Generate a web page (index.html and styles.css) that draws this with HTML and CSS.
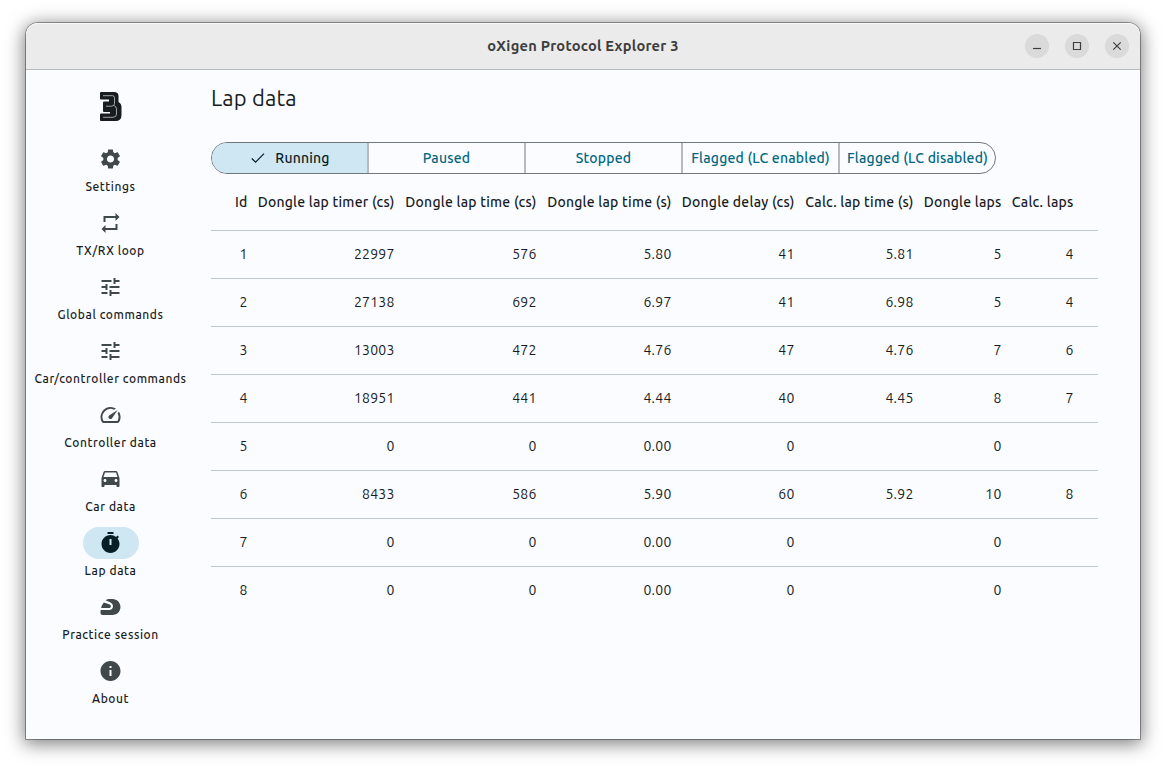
FILE: index.html
```html
<!DOCTYPE html>
<html lang="en">
<head>
<meta charset="utf-8">
<title>oXigen Protocol Explorer 3</title>
<link rel="stylesheet" href="styles.css">
</head>
<body>
<div class="window">
  <header class="titlebar">
    <h1 class="title">oXigen Protocol Explorer 3</h1>
    <div class="controls">
      <button class="control" aria-label="Minimize"><svg viewBox="0 0 24 24"><path d="M8 14.500h8"/></svg></button>
      <button class="control" aria-label="Maximize"><svg viewBox="0 0 24 24"><path d="M8.500 8.500h7v7h-7z"/></svg></button>
      <button class="control" aria-label="Close"><svg viewBox="0 0 24 24"><path d="M8.300 8.300l7.400 7.400M15.700 8.300l-7.400 7.400"/></svg></button>
    </div>
  </header>
  <div class="body">
    <nav class="rail">
      <svg class="logo" viewBox="0 0 24 30"><path class="logo-bold" d="M2 0h13q4.500 0 4.500 4v6q3 1.500 3 5v8q0 6-6 6H2q-1 0-1-1v-5.500q0-1 1-1h9V20H5q-1 0-1-1v-8.500q0-1 1-1h5V7.500H2q-1 0-1-1V1q0-1 1-1z"/><path class="logo-line" d="M4 3.700h9.500q2 0 2 2v5.500q0 3-3 3H7M15 13.500q2.500 1 2.500 3.500v5q0 3.300-3.500 3.300H4"/></svg>
      <a class="item"><span class="pill"><svg viewBox="0 0 24 24"><path d="M19.14 12.94c.04-.3.06-.61.06-.94 0-.32-.02-.64-.07-.94l2.030-1.580c.18-.14.23-.41.12-.61l-1.920-3.320c-.12-.22-.37-.29-.59-.22l-2.390.96c-.5-.38-1.030-.7-1.620-.94l-.36-2.540c-.04-.24-.24-.41-.48-.41h-3.840c-.24 0-.43.17-.47.41l-.36 2.540c-.59.24-1.130.57-1.620.94l-2.390-.96c-.22-.08-.47 0-.59.22L2.740 8.870c-.12.21-.08.47.12.61l2.030 1.580c-.05.3-.09.63-.09.94s.02.64.07.94l-2.030 1.580c-.18.14-.23.41-.12.61l1.920 3.320c.12.22.37.29.59.22l2.390-.96c.5.38 1.030.7 1.620.94l.36 2.540c.05.24.24.41.48.41h3.840c.24 0 .44-.17.47-.41l.36-2.540c.59-.24 1.130-.56 1.620-.94l2.390.96c.22.08.47 0 .59-.22l1.920-3.320c.12-.22.07-.47-.12-.61l-2.010-1.580zM12 15.600c-1.980 0-3.600-1.620-3.600-3.600s1.620-3.600 3.600-3.600 3.600 1.620 3.600 3.600-1.620 3.600-3.600 3.600z"/></svg></span><span class="label">Settings</span></a>
      <a class="item"><span class="pill"><svg viewBox="0 0 24 24"><path d="M7 7h10v3l4-4-4-4v3H5v6h2V7zm10 10H7v-3l-4 4 4 4v-3h12v-6h-2v4z"/></svg></span><span class="label">TX/RX loop</span></a>
      <a class="item"><span class="pill"><svg viewBox="0 0 24 24"><path d="M3 17v2h6v-2H3zM3 5v2h10V5H3zm10 16v-2h8v-2h-8v-2h-2v6h2zM7 9v2H3v2h4v2h2V9H7zm14 4v-2H11v2h10zm-6-4h2V7h4V5h-4V3h-2v6z"/></svg></span><span class="label">Global commands</span></a>
      <a class="item"><span class="pill"><svg viewBox="0 0 24 24"><path d="M3 17v2h6v-2H3zM3 5v2h10V5H3zm10 16v-2h8v-2h-8v-2h-2v6h2zM7 9v2H3v2h4v2h2V9H7zm14 4v-2H11v2h10zm-6-4h2V7h4V5h-4V3h-2v6z"/></svg></span><span class="label">Car/controller commands</span></a>
      <a class="item"><span class="pill"><svg viewBox="0 0 24 24"><path d="M20.380 8.570l-1.230 1.850a8 8 0 0 1-.22 7.580H5.070A8 8 0 0 1 15.580 6.850l1.850-1.230A10 10 0 0 0 3.350 19a2 2 0 0 0 1.720 1h13.850a2 2 0 0 0 1.740-1 10 10 0 0 0-.27-10.440zm-9.790 6.840a2 2 0 0 0 2.830 0l5.660-8.490-8.490 5.660a2 2 0 0 0 0 2.830z"/></svg></span><span class="label">Controller data</span></a>
      <a class="item"><span class="pill"><svg viewBox="0 0 24 24"><path d="M18.920 5.010C18.720 4.420 18.160 4 17.500 4h-11c-.66 0-1.210.42-1.420 1.010L3 11v8c0 .55.45 1 1 1h1c.55 0 1-.45 1-1v-1h12v1c0 .55.45 1 1 1h1c.55 0 1-.45 1-1v-8l-2.080-5.990zM6.500 15c-.83 0-1.500-.67-1.500-1.500S5.670 12 6.500 12s1.500.67 1.500 1.500S7.330 15 6.500 15zm11 0c-.83 0-1.500-.67-1.500-1.500s.67-1.500 1.500-1.500 1.500.67 1.500 1.500-.67 1.500-1.500 1.500zM5 10l1.500-4.500h11L19 10H5z"/></svg></span><span class="label">Car data</span></a>
      <a class="item active"><span class="pill"><svg viewBox="0 0 24 24"><path d="M9 1h6v2H9zM19.030 7.390l1.420-1.420c-.43-.51-.9-.99-1.410-1.410l-1.420 1.420C16.070 4.740 14.120 4 12 4c-4.970 0-9 4.030-9 9s4.020 9 9 9 9-4.030 9-9c0-2.120-.74-4.070-1.970-5.610zM13 14h-2V8h2v6z"/></svg></span><span class="label">Lap data</span></a>
      <a class="item"><span class="pill"><svg viewBox="0 0 24 24"><path d="M12 4C9.800 4 8.200 4.500 7 5.300l5.100 2.200a4 4 0 0 1 2.400 3.700c0 2.100-1.700 3.800-3.800 3.800H2.200c-.2 1-.2 2-.2 3 0 1.100.9 2 2 2h10c4.400 0 8-3.600 8-8s-3.600-8-8-8zM5.400 7.500C4 9 3.100 11 2.600 13h8c1 0 1.800-.8 1.800-1.800 0-.8-.5-1.400-1.200-1.700z" fill-rule="evenodd"/></svg></span><span class="label">Practice session</span></a>
      <a class="item"><span class="pill"><svg viewBox="0 0 24 24"><path d="M12 2C6.480 2 2 6.480 2 12s4.480 10 10 10 10-4.480 10-10S17.520 2 12 2zm1 15h-2v-6h2v6zm0-8h-2V7h2v2z"/></svg></span><span class="label">About</span></a>
    </nav>
    <main class="content">
      <h2 class="heading">Lap data</h2>
      <div class="segments">
        <button class="segment selected"><svg class="check" viewBox="0 0 18 18"><path d="M2.800 9.500l3.800 3.700L15 4.600"/></svg>Running</button>
        <button class="segment">Paused</button>
        <button class="segment">Stopped</button>
        <button class="segment">Flagged (LC enabled)</button>
        <button class="segment">Flagged (LC disabled)</button>
      </div>
      <table class="laps">
        <colgroup><col class="c-id"><col class="c-timer"><col class="c-cs"><col class="c-s"><col class="c-delay"><col class="c-calc"><col class="c-laps"><col class="c-claps"><col class="c-end"></colgroup>
        <thead><tr><th>Id</th><th>Dongle lap timer (cs)</th><th>Dongle lap time (cs)</th><th>Dongle lap time (s)</th><th>Dongle delay (cs)</th><th>Calc. lap time (s)</th><th>Dongle laps</th><th>Calc. laps</th><th></th></tr></thead>
        <tbody>
          <tr><td>1</td><td>22997</td><td>576</td><td>5.80</td><td>41</td><td>5.81</td><td>5</td><td>4</td><td></td></tr>
          <tr><td>2</td><td>27138</td><td>692</td><td>6.97</td><td>41</td><td>6.98</td><td>5</td><td>4</td><td></td></tr>
          <tr><td>3</td><td>13003</td><td>472</td><td>4.76</td><td>47</td><td>4.76</td><td>7</td><td>6</td><td></td></tr>
          <tr><td>4</td><td>18951</td><td>441</td><td>4.44</td><td>40</td><td>4.45</td><td>8</td><td>7</td><td></td></tr>
          <tr><td>5</td><td>0</td><td>0</td><td>0.00</td><td>0</td><td></td><td>0</td><td></td><td></td></tr>
          <tr><td>6</td><td>8433</td><td>586</td><td>5.90</td><td>60</td><td>5.92</td><td>10</td><td>8</td><td></td></tr>
          <tr><td>7</td><td>0</td><td>0</td><td>0.00</td><td>0</td><td></td><td>0</td><td></td><td></td></tr>
          <tr><td>8</td><td>0</td><td>0</td><td>0.00</td><td>0</td><td></td><td>0</td><td></td><td></td></tr>
        </tbody>
      </table>
    </main>
  </div>
</div>
</body>
</html>
```
FILE: styles.css
```css
* { box-sizing: border-box; }
body {
  margin: 0;
  padding: 23px 26px 29px;
  height: 768px;
  overflow: hidden;
  background: #fff;
  color: #191c1e;
  font-family: Ubuntu, "Noto Sans", sans-serif;
}
button { margin: 0; padding: 0; border: 0; background: none; font: inherit; color: inherit; }
.window {
  height: 716px;
  display: flex;
  flex-direction: column;
  border-radius: 12px 12px 0 0;
  background: #fbfcff;
  box-shadow: 0 0 0 1px rgba(0,0,0,.34), 0 3px 18px 2px rgba(0,0,0,.5);
}
.titlebar {
  height: 47px;
  flex: none;
  display: grid;
  grid-template-columns: 1fr auto 1fr;
  align-items: center;
  border-radius: 12px 12px 0 0;
  background: #ebebeb;
  border-bottom: 1px solid #b9bbbb;
  box-shadow: inset 0 1px #f8f8f8;
}
.title { grid-column: 2; margin: 0; font-size: 14.667px; line-height: 20px; font-weight: 700; letter-spacing: .23px; color: #3d3d3d; }
.controls { display: flex; justify-content: flex-end; gap: 16px; padding-right: 11px; }
.control { width: 24px; height: 24px; border-radius: 50%; background: #dadada; }
.control svg { display: block; width: 24px; height: 24px; fill: none; stroke: #3d3d3d; stroke-width: 1.2; }
.body { flex: 1; display: flex; }
.rail { width: 169px; flex: none; display: flex; flex-direction: column; align-items: center; padding-top: 22px; }
.logo { width: 24px; height: 30px; margin-bottom: 21px; fill: none; }
.logo-bold { fill: #191c1e; }
.logo-line { stroke: #c4c8ca; stroke-width: .8; }
.item { width: 100%; height: 64px; display: flex; flex-direction: column; align-items: center; color: #191c1e; }
.pill { width: 56px; height: 32px; display: grid; place-items: center; border-radius: 16px; }
.pill svg { width: 24px; height: 24px; fill: #40484c; }
.pill path { transform: translateX(-.5px); }
.active .pill { background: #cfe6f3; }
.active .pill svg { fill: #071e27; }
.label { margin-top: 4px; font-size: 12px; line-height: 16px; font-weight: 500; letter-spacing: .58px; white-space: nowrap; }
.content { flex: 1; padding: 12px 42px 0 16px; }
.heading { margin: 0; font-size: 22px; line-height: 32px; font-weight: 400; letter-spacing: .15px; }
.segments { width: 785px; height: 32px; margin-top: 28px; display: grid; grid-template-columns: 155px repeat(4, 157px); border: 1px solid #70787d; border-radius: 16px; overflow: hidden; }
.segment { display: flex; align-items: center; justify-content: center; font-size: 14px; font-weight: 500; letter-spacing: .2px; color: #00677f; white-space: nowrap; }
.segment + .segment { border-left: 2px solid #b5babe; }
.segment.selected { background: #cfe6f3; color: #071e27; }
.check { width: 18px; height: 18px; margin-right: 8px; fill: none; stroke: #071e27; stroke-width: 1.2; }
.laps { width: 887px; table-layout: fixed; border-collapse: collapse; }
.c-id { width: 37px; }
.c-timer { width: 147px; }
.c-cs { width: 142px; }
.c-s { width: 135px; }
.c-delay { width: 123px; }
.c-calc { width: 119px; }
.c-laps { width: 88px; }
.c-claps { width: 72px; }
.c-end { width: 24px; }
.laps th, .laps td { padding: 0 .4px 0 0; text-align: right; white-space: nowrap; font-size: 14px; line-height: 20px; letter-spacing: .25px; }
.laps th { height: 56px; font-weight: 500; letter-spacing: .22px; }
.laps td { height: 48px; border-top: 1px solid #bfc8cd; }
```
